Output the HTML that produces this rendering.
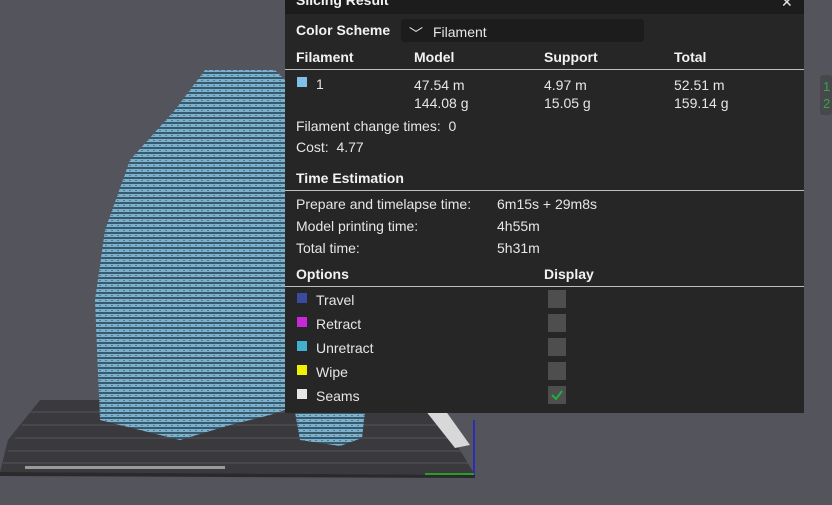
<!DOCTYPE html><html><head><style>
body{margin:0;width:832px;height:505px;overflow:hidden;background:#54545c;font-family:"Liberation Sans",sans-serif;position:relative}
.p{position:absolute;left:285px;top:0;width:519px;height:413px;background:#262626;color:#e6e6e6;font-size:14px}
.t{position:absolute;white-space:nowrap}
.b{font-weight:bold;color:#f2f2f2}
.hr{position:absolute;left:0;width:519px;height:1px;background:#bdbdbd}
.sq{position:absolute;width:10px;height:10px}
.cb{position:absolute;left:263px;width:18px;height:18px;background:#4e4e4e}
</style></head><body>
<svg width="832" height="505" style="position:absolute;left:0;top:0">
<defs><pattern id="st" width="6" height="5" patternUnits="userSpaceOnUse"><rect width="6" height="5" fill="#7cb0cc"/><rect y="2" width="6" height="2" fill="#36596c"/><rect x="3" y="0" width="2" height="1" fill="#4e7a92"/></pattern></defs>
<polygon points="40,400 430,400 475,475 0,472 8,440" fill="#3a3a3e"/>
<polygon points="0,472 475,475 475,478 0,476" fill="#2a2a2c"/>
<g stroke="#55555a" stroke-width="1">
<line x1="30" y1="412" x2="440" y2="412"/><line x1="22" y1="425" x2="448" y2="425"/><line x1="15" y1="438" x2="456" y2="438"/><line x1="8" y1="451" x2="464" y2="451"/><line x1="3" y1="463" x2="470" y2="463"/>
</g>
<rect x="25" y="466" width="200" height="3" fill="#9a9a9a"/>
<polygon points="425,410 445,410 470,445 455,448" fill="#d8d8d8"/>
<path d="M205,70 L275,70 L285,80 L285,410 L295,412 L300,440 L340,446 L362,438 L365,412 L285,410 L270,415 L230,425 L180,440 L100,420 L95,300 L105,230 L130,160 L175,110 Z" fill="url(#st)"/>
<line x1="474" y1="475" x2="474" y2="420" stroke="#2020d0" stroke-width="1.5"/>
<line x1="474" y1="474" x2="425" y2="474" stroke="#20c020" stroke-width="1.5"/>
</svg>
<div style="position:absolute;left:820px;top:75px;width:12px;height:40px;background:#47474c;border-radius:3px"></div>
<div class="t" style="left:823px;top:78px;color:#2ea84a;font-size:13px;line-height:17px">1<br>2</div>
<div class="p">
<div style="position:absolute;left:0;top:0;width:519px;height:14px;background:#1c1c1c"></div>
<div class="t b" style="left:11px;top:-8px;font-size:14px">Slicing Result</div>
<div class="t" style="left:496px;top:-6px;font-size:14px">✕</div>
<div class="t b" style="left:11px;top:22px">Color Scheme</div>
<div style="position:absolute;left:116px;top:19px;width:243px;height:23px;background:#1c1c1c;border-radius:3px"></div>
<div class="t" style="left:124px;top:24px">﹀</div>
<div class="t" style="left:148px;top:24px">Filament</div>
<div class="t b" style="left:11px;top:49px">Filament</div>
<div class="t b" style="left:129px;top:49px">Model</div>
<div class="t b" style="left:259px;top:49px">Support</div>
<div class="t b" style="left:389px;top:49px">Total</div>
<div class="hr" style="top:69px"></div>
<div class="sq" style="left:12px;top:77px;background:#7ec0e8"></div>
<div class="t" style="left:31px;top:76px">1</div>
<div class="t" style="left:129px;top:76px;line-height:18px">47.54 m<br>144.08 g</div>
<div class="t" style="left:259px;top:76px;line-height:18px">4.97 m<br>15.05 g</div>
<div class="t" style="left:389px;top:76px;line-height:18px">52.51 m<br>159.14 g</div>
<div class="t" style="left:11px;top:118px">Filament change times:&nbsp; 0</div>
<div class="t" style="left:11px;top:139px">Cost:&nbsp; 4.77</div>
<div class="t b" style="left:11px;top:170px">Time Estimation</div>
<div class="hr" style="top:190px"></div>
<div class="t" style="left:11px;top:196px">Prepare and timelapse time:</div>
<div class="t" style="left:212px;top:196px">6m15s + 29m8s</div>
<div class="t" style="left:11px;top:218px">Model printing time:</div>
<div class="t" style="left:212px;top:218px">4h55m</div>
<div class="t" style="left:11px;top:240px">Total time:</div>
<div class="t" style="left:212px;top:240px">5h31m</div>
<div class="t b" style="left:11px;top:266px">Options</div>
<div class="t b" style="left:259px;top:266px">Display</div>
<div class="hr" style="top:286px"></div>
<div class="sq" style="left:12px;top:293px;background:#3a4aa0"></div><div class="t" style="left:31px;top:292px">Travel</div><div class="cb" style="top:290px"></div>
<div class="sq" style="left:12px;top:317px;background:#c828d8"></div><div class="t" style="left:31px;top:316px">Retract</div><div class="cb" style="top:314px"></div>
<div class="sq" style="left:12px;top:341px;background:#40b0d0"></div><div class="t" style="left:31px;top:340px">Unretract</div><div class="cb" style="top:338px"></div>
<div class="sq" style="left:12px;top:365px;background:#f0f000"></div><div class="t" style="left:31px;top:364px">Wipe</div><div class="cb" style="top:362px"></div>
<div class="sq" style="left:12px;top:389px;background:#e6e6e6"></div><div class="t" style="left:31px;top:388px">Seams</div><div class="cb" style="top:386px"><svg width="18" height="18"><path d="M4,9 L8,13 L14,5" stroke="#20b040" stroke-width="2" fill="none"/></svg></div>
</div>
</body></html>
